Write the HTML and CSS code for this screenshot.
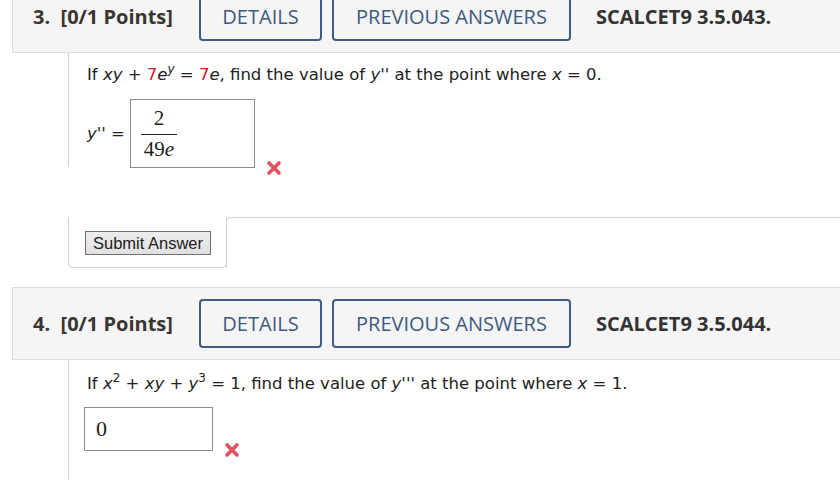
FILE: index.html
```html
<!DOCTYPE html>
<html>
<head>
<meta charset="utf-8">
<link rel="stylesheet" href="styles.css">
</head>
<body>
<div class="page">
  <section class="question q3">
    <div class="qhead">
      <span class="qnum">3.&nbsp; [0/1 Points]</span>
      <span class="btn btn-details">DETAILS</span>
      <span class="btn btn-prev">PREVIOUS ANSWERS</span>
      <span class="qcode">SCALCET9 3.5.043.</span>
    </div>
    <div class="qbody">
      <p class="prompt">If <i>xy</i> + <span class="red">7</span><i>e<sup>y</sup></i> = <span class="red">7</span><i>e</i>, find the value of <i>y''</i> at the point where <i>x</i> = 0.</p>
      <div class="answer-row">
        <span class="lhs"><i>y''</i> =</span>
        <div class="ansbox frac-box">
          <span class="frac"><span class="num">2</span><span class="den">49<i>e</i></span></span>
        </div>
        <svg class="xmark" width="16" height="16" viewBox="0 0 16 16"><path d="M3 3 L13 13 M13 3 L3 13" stroke="#e0505e" stroke-width="3.6" stroke-linecap="round"/></svg>
      </div>
    </div>
    <div class="submit-row">
      <div class="submit-cell"><span class="submit">Submit Answer</span></div>
      <div class="submit-rest"></div>
    </div>
  </section>

  <section class="question q4">
    <div class="qhead">
      <span class="qnum">4.&nbsp; [0/1 Points]</span>
      <span class="btn btn-details">DETAILS</span>
      <span class="btn btn-prev">PREVIOUS ANSWERS</span>
      <span class="qcode">SCALCET9 3.5.044.</span>
    </div>
    <div class="qbody qbody4">
      <p class="prompt">If <i>x</i><sup>2</sup> + <i>xy</i> + <i>y</i><sup>3</sup> = 1, find the value of <i>y'''</i> at the point where <i>x</i> = 1.</p>
      <div class="answer-row row4">
        <div class="ansbox plain-box">0</div>
        <svg class="xmark" width="16" height="16" viewBox="0 0 16 16"><path d="M3 3 L13 13 M13 3 L3 13" stroke="#e0505e" stroke-width="3.6" stroke-linecap="round"/></svg>
      </div>
    </div>
  </section>
</div>
</body>
</html>
```

FILE: styles.css
```css
html, body {
  margin: 0;
  padding: 0;
  background: #ffffff;
  overflow: hidden;
}
.page {
  width: 840px;
  height: 480px;
  overflow: hidden;
}
.question {
  display: flex;
  flex-direction: column;
}
.q3 {
  margin-top: -20px;
}
.q4 {
  margin-top: 19px;
}
.qhead {
  margin-left: 12px;
  height: 73px;
  box-sizing: border-box;
  background: #f5f5f5;
  border: 1px solid #dddddd;
  border-right: none;
  display: flex;
  align-items: center;
  padding-left: 20px;
  font-family: "Open Sans", sans-serif;
  font-size: 20px;
}
.qnum {
  font-weight: 700;
  color: #3a3632;
  width: 166px;
}
.btn {
  box-sizing: border-box;
  height: 49px;
  display: flex;
  align-items: center;
  justify-content: center;
  border: 2px solid #3b5d86;
  border-radius: 4px;
  color: #3d5a80;
  background: #f5f5f5;
  font-weight: 500;
  letter-spacing: 0;
}
.btn-details {
  width: 123px;
}
.btn-prev {
  width: 239px;
  margin-left: 10px;
}
.qcode {
  margin-left: 25px;
  font-weight: 700;
  color: #333333;
}
.qbody {
  margin-left: 68px;
  border-left: 1px solid #d2d2d2;
  padding: 10px 0 0 18px;
  font-family: "DejaVu Sans", Verdana, sans-serif;
  font-size: 16.5px;
  color: #222222;
}
.prompt {
  margin: 0;
  line-height: 24px;
}
.prompt sup {
  font-size: 12px;
  line-height: 0;
  position: relative;
  top: -1px;
}
.red {
  color: #d0202a;
}
.answer-row {
  display: flex;
  align-items: center;
  margin-top: 12px;
  height: 68px;
}
.lhs {
  width: 43px;
}
.ansbox {
  box-sizing: border-box;
  border: 1px solid #8c8c8c;
  background: #ffffff;
  font-family: "Liberation Serif", "DejaVu Serif", serif;
  color: #222222;
}
.frac-box {
  width: 125px;
  height: 69px;
  display: flex;
  align-items: center;
  padding-left: 10px;
}
.frac {
  display: inline-flex;
  flex-direction: column;
  align-items: center;
  font-size: 21px;
  line-height: 24px;
}
.num {
  padding: 0 6px 4px;
  border-bottom: 1.5px solid #222;
  width: 24px;
  text-align: center;
}
.den {
  padding-top: 2px;
}
.xmark {
  align-self: flex-end;
  margin-left: 11px;
  margin-bottom: -9px;
}
.submit-row {
  display: flex;
  margin-top: 50px;
  height: 51px;
}
.submit-cell {
  margin-left: 68px;
  width: 159px;
  box-sizing: border-box;
  border-left: 1px solid #d2d2d2;
  border-bottom: 1px solid #d2d2d2;
  border-right: 1px solid #d2d2d2;
  border-bottom-left-radius: 5px;
  border-bottom-right-radius: 5px;
  padding: 14px 0 0 16px;
}
.submit {
  display: inline-block;
  box-sizing: border-box;
  height: 24px;
  width: 126px;
  line-height: 22px;
  text-align: center;
  background: linear-gradient(#ededed, #e1e1e1);
  border: 1px solid #707070;
  font-family: "Liberation Sans", Arial, sans-serif;
  font-size: 16.5px;
  color: #222222;
}
.submit-rest {
  flex: 1;
  margin-left: -1px;
  border-top: 1px solid #d2d2d2;
  border-left: 1px solid #d2d2d2;
  border-top-left-radius: 5px;
  height: 51px;
  box-sizing: border-box;
}
.qbody4 {
  padding-top: 12px;
  height: 200px;
}
.row4 {
  margin-top: 11px;
  height: 44px;
}
.plain-box {
  width: 129px;
  height: 44px;
  margin-left: -3px;
  font-size: 22px;
  padding-left: 11px;
  display: flex;
  align-items: center;
}
.row4 .xmark {
  margin-left: 11px;
  margin-bottom: -7px;
}
```
